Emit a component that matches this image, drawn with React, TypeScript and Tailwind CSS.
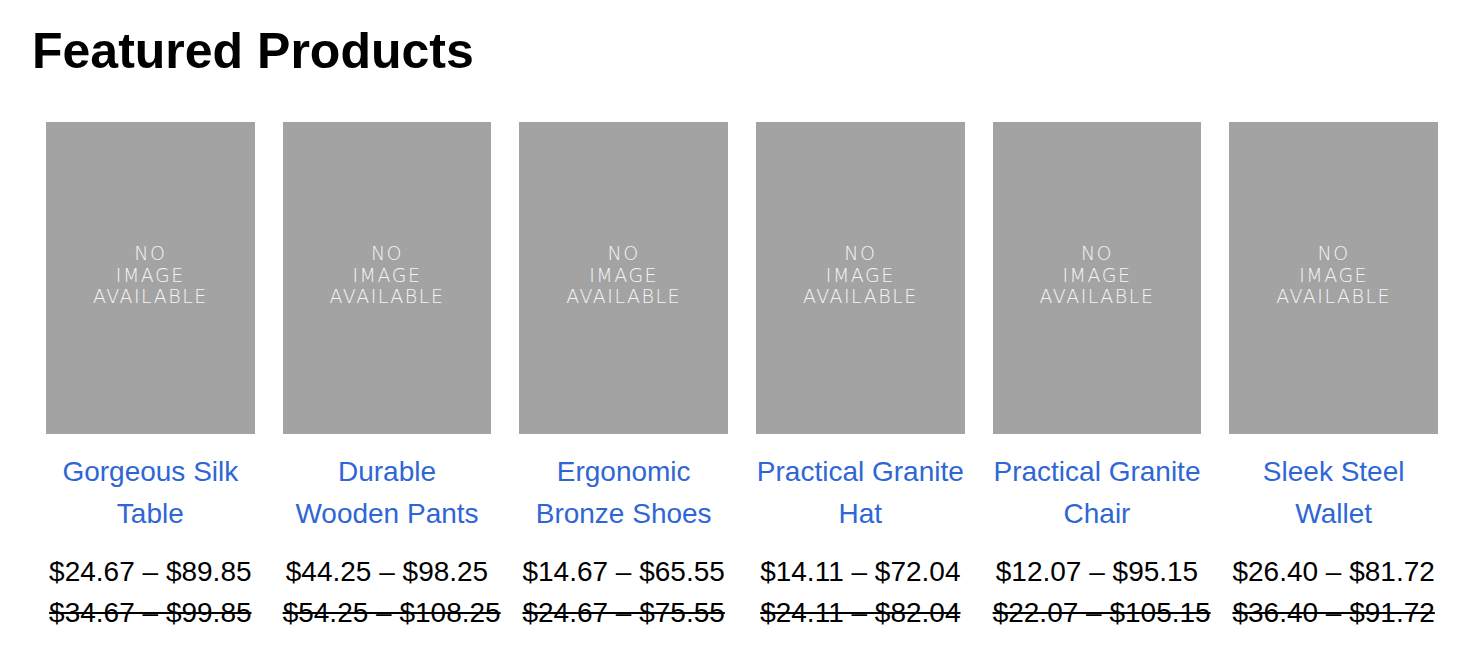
const products = [
  { name: "Gorgeous Silk Table", price: "$24.67 – $89.85", old: "$34.67 – $99.85" },
  { name: "Durable Wooden Pants", price: "$44.25 – $98.25", old: "$54.25 – $108.25" },
  { name: "Ergonomic Bronze Shoes", price: "$14.67 – $65.55", old: "$24.67 – $75.55" },
  { name: "Practical Granite Hat", price: "$14.11 – $72.04", old: "$24.11 – $82.04" },
  { name: "Practical Granite Chair", price: "$12.07 – $95.15", old: "$22.07 – $105.15" },
  { name: "Sleek Steel Wallet", price: "$26.40 – $81.72", old: "$36.40 – $91.72" },
];

function NoImage() {
  return (
    <div className="w-full h-[312px] bg-[#a3a3a3] flex items-center justify-center">
      <div
        className="text-center text-[#f4f4f4] text-[19px] leading-[21.5px] font-extralight tracking-[0.08em] pb-[5px]"
        style={{ fontFamily: '"DejaVu Sans", "Noto Sans", sans-serif' }}
      >
        <div>NO</div>
        <div>IMAGE</div>
        <div>AVAILABLE</div>
      </div>
    </div>
  );
}

export default function App() {
  return (
    <div
      className="bg-white min-h-screen pl-8 pr-[18px] pt-[22px] text-black"
      style={{ fontFamily: '"Liberation Sans", Arial, sans-serif' }}
    >
      <h1 className="text-[50px] leading-[58px] font-bold">Featured Products</h1>

      <div className="grid grid-cols-6 mt-[42px]">
        {products.map((p) => (
          <div key={p.name} className="px-[14px]">
            <NoImage />
            <a
              href="#"
              className="block mt-[17px] text-center text-[28px] leading-[42px] text-[#2f66d6]"
            >
              {p.name}
            </a>
            <div className="mt-[16px] text-center text-[28px] leading-[41px]">
              <div className="whitespace-nowrap">{p.price}</div>
              <div className="whitespace-nowrap line-through">{p.old}</div>
            </div>
          </div>
        ))}
      </div>
    </div>
  );
}
